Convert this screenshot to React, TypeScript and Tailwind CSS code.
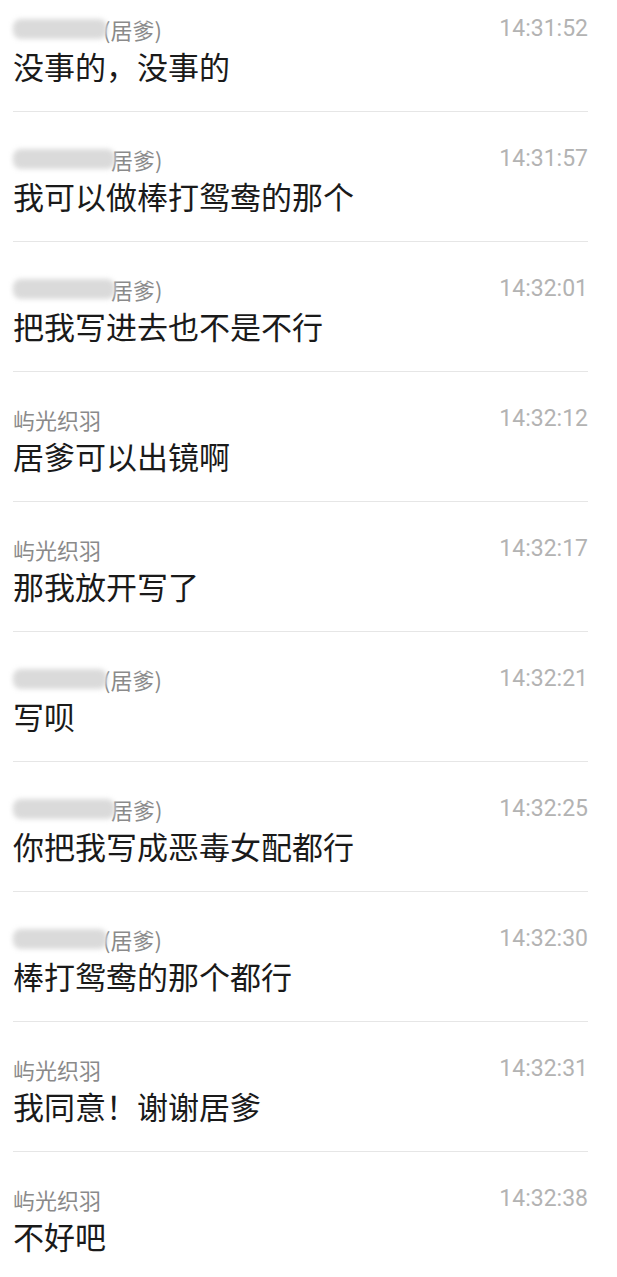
import React from "react";

type Msg = { name: string; blurW?: number; time: string; text: string };

const msgs: Msg[] = [
  { name: "(居爹)", blurW: 94, time: "14:31:52", text: "没事的，没事的" },
  { name: "居爹)", blurW: 102, time: "14:31:57", text: "我可以做棒打鸳鸯的那个" },
  { name: "居爹)", blurW: 102, time: "14:32:01", text: "把我写进去也不是不行" },
  { name: "屿光织羽", time: "14:32:12", text: "居爹可以出镜啊" },
  { name: "屿光织羽", time: "14:32:17", text: "那我放开写了" },
  { name: "(居爹)", blurW: 94, time: "14:32:21", text: "写呗" },
  { name: "居爹)", blurW: 102, time: "14:32:25", text: "你把我写成恶毒女配都行" },
  { name: "(居爹)", blurW: 94, time: "14:32:30", text: "棒打鸳鸯的那个都行" },
  { name: "屿光织羽", time: "14:32:31", text: "我同意！谢谢居爹" },
  { name: "屿光织羽", time: "14:32:38", text: "不好吧" },
];

const cjk = { fontFamily: '"Noto Sans CJK SC", "Noto Sans", sans-serif' };

export default function App() {
  return (
    <div className="w-[617px] h-[1277px] overflow-hidden bg-white" style={cjk}>
      <div className="pl-[13px] pr-[29px] flex flex-col">
        {msgs.map((m, i) => (
          <div
            key={i}
            className={`${i === 0 ? "pt-[17px]" : "pt-[35px]"} pb-[27px] ${
              i < msgs.length - 1 ? "border-b border-[#e6e6e6]" : ""
            }`}
          >
            <div className="flex items-center justify-between h-[24px]">
              <div className="flex items-center text-[22px] leading-[24px] text-[#8a8a8a]">
                {m.blurW ? (
                  <div
                    className="h-[20px] bg-[#dadada] blur-[2.5px] rounded-[8px]"
                    style={{ width: m.blurW }}
                  />
                ) : null}
                <span className={m.blurW ? "-ml-[4px]" : ""}>{m.name}</span>
              </div>
              <span
                className="text-[23px] leading-[24px] text-[#b3b3b3]"
                style={{ fontFamily: 'Roboto, "Liberation Sans", sans-serif' }}
              >
                {m.time}
              </span>
            </div>
            <div className="mt-[7px] text-[31px] leading-[36px] text-[#1a1a1a]">
              {m.text}
            </div>
          </div>
        ))}
      </div>
    </div>
  );
}
